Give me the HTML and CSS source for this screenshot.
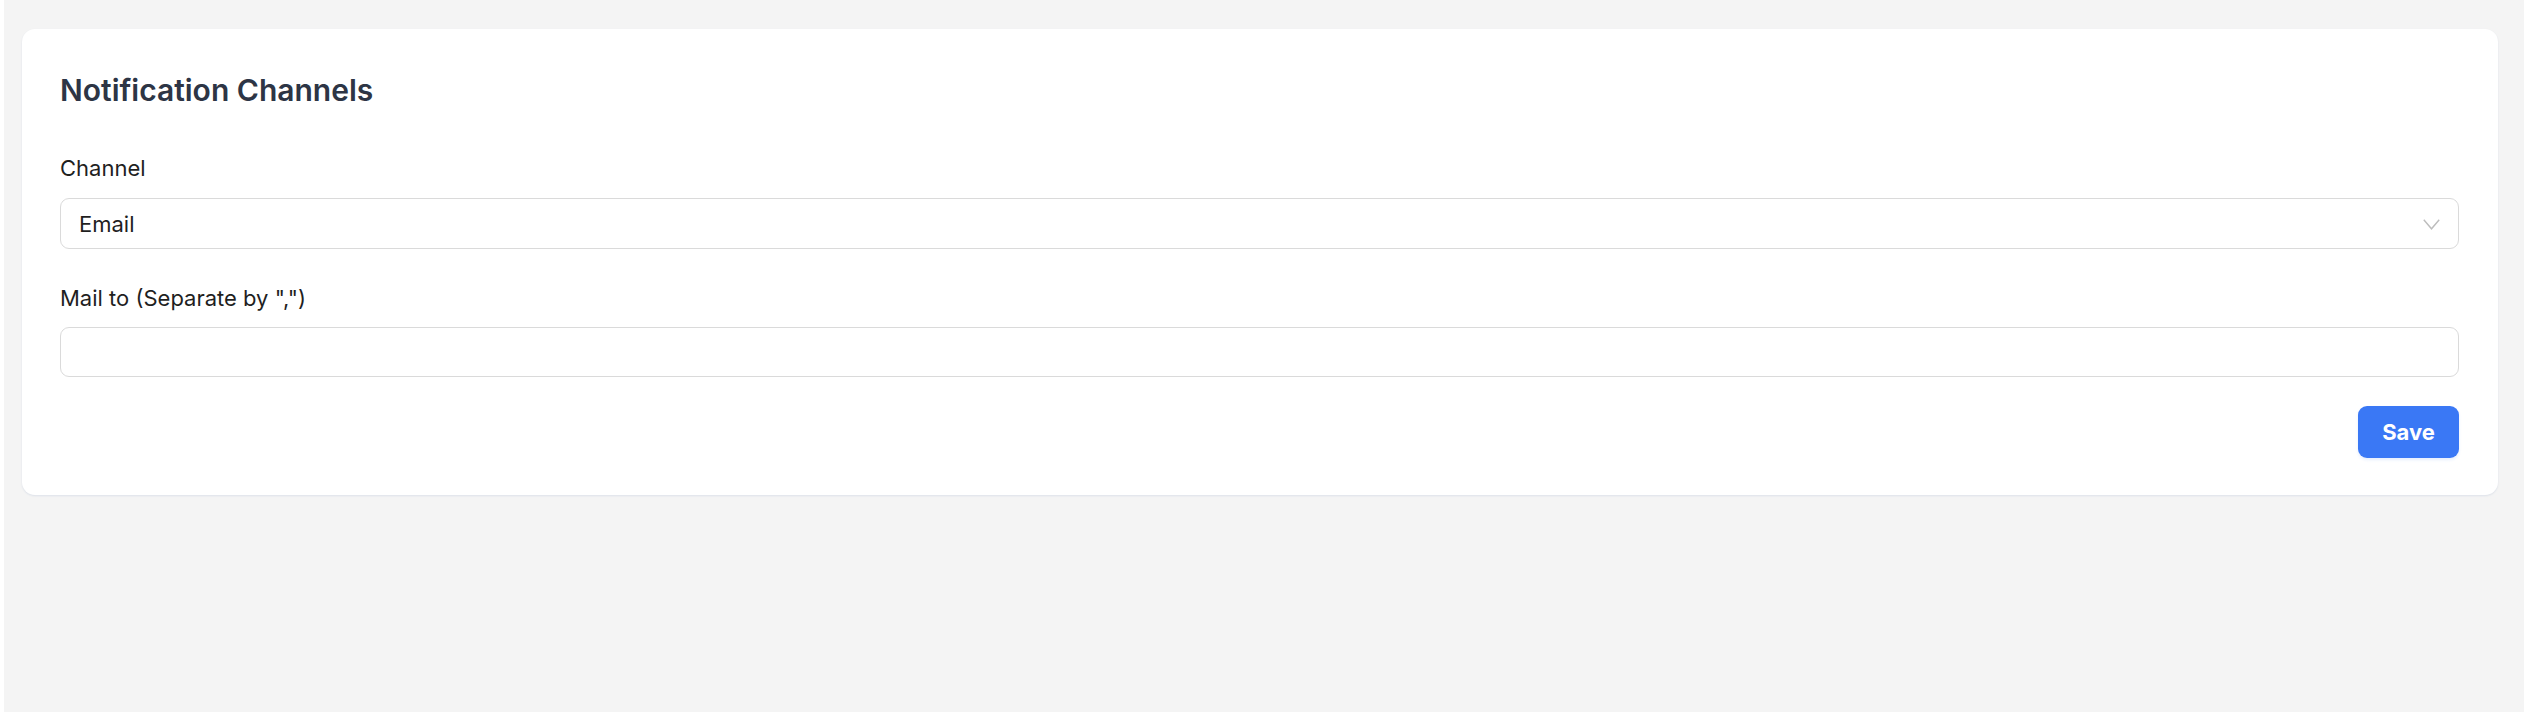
FILE: index.html
```html
<!DOCTYPE html>
<html lang="en">
<head>
  <meta charset="UTF-8">
  <title>Notification Channels</title>
  <link rel="stylesheet" href="styles.css">
</head>
<body>

  <div class="card">
    <h1>Notification Channels</h1>

    <form id="channelForm" class="form">
      <label for="channel">Channel</label>
      <div class="select" id="channel">
        <span>Email</span>
        <svg width="17" height="11" viewBox="0 0 17 11">
          <polyline points="0.8,0.8 8.5,9.8 16.2,0.8" fill="none" stroke="#bdbdbd" stroke-width="1.4"/>
        </svg>
      </div>

      <label for="mailTo" class="second">Mail to (Separate by ",")</label>
      <input type="text" id="mailTo" name="mailTo">

      <div class="actions">
        <button type="submit" class="btn-save">Save</button>
      </div>
    </form>
  </div>

</body>
</html>
```

FILE: styles.css
```css
body {
  margin: 0;
  min-height: 712px;
  box-sizing: border-box;
  background-color: #f4f4f4;
  border-left: 4px solid #ffffff;
  padding: 29px 26px 0 18px;
  font-family: Inter, "Noto Sans", sans-serif;
  color: #1f1f1f;
}

.card {
  background-color: #ffffff;
  border-radius: 13px;
  box-shadow: 0 1px 2px rgba(60, 90, 160, 0.12);
  padding: 38px 39px 37px 38px;
}

h1 {
  margin: 0 0 40px;
  font-size: 30px;
  line-height: 46px;
  font-weight: 600;
  color: #2d3545;
}

.form {
  display: flex;
  flex-direction: column;
}

label {
  display: block;
  font-size: 22px;
  line-height: 30px;
  color: #1f1f1f;
  margin-bottom: 15px;
}

label.second {
  margin-top: 34px;
  margin-bottom: 14px;
}

.select {
  display: flex;
  align-items: center;
  justify-content: space-between;
  height: 51px;
  box-sizing: border-box;
  border: 1px solid #dadada;
  border-radius: 9px;
  padding: 0 18px;
  font-size: 22px;
  color: #1f1f1f;
}

.select svg {
  margin-top: 2px;
}

input[type="text"] {
  height: 50px;
  box-sizing: border-box;
  border: 1px solid #dadada;
  border-radius: 9px;
  padding: 0 18px;
  font-family: inherit;
  font-size: 22px;
  outline: none;
}

.actions {
  display: flex;
  justify-content: flex-end;
  margin-top: 29px;
}

.btn-save {
  height: 52px;
  width: 101px;
  border: none;
  border-radius: 9px;
  background-color: #3a78f5;
  color: #ffffff;
  font-family: inherit;
  font-size: 22px;
  font-weight: 700;
  cursor: pointer;
  box-shadow: 0 2px 3px rgba(58, 120, 245, 0.12);
}

.btn-save:hover {
  background-color: #2f67d8;
}
```
